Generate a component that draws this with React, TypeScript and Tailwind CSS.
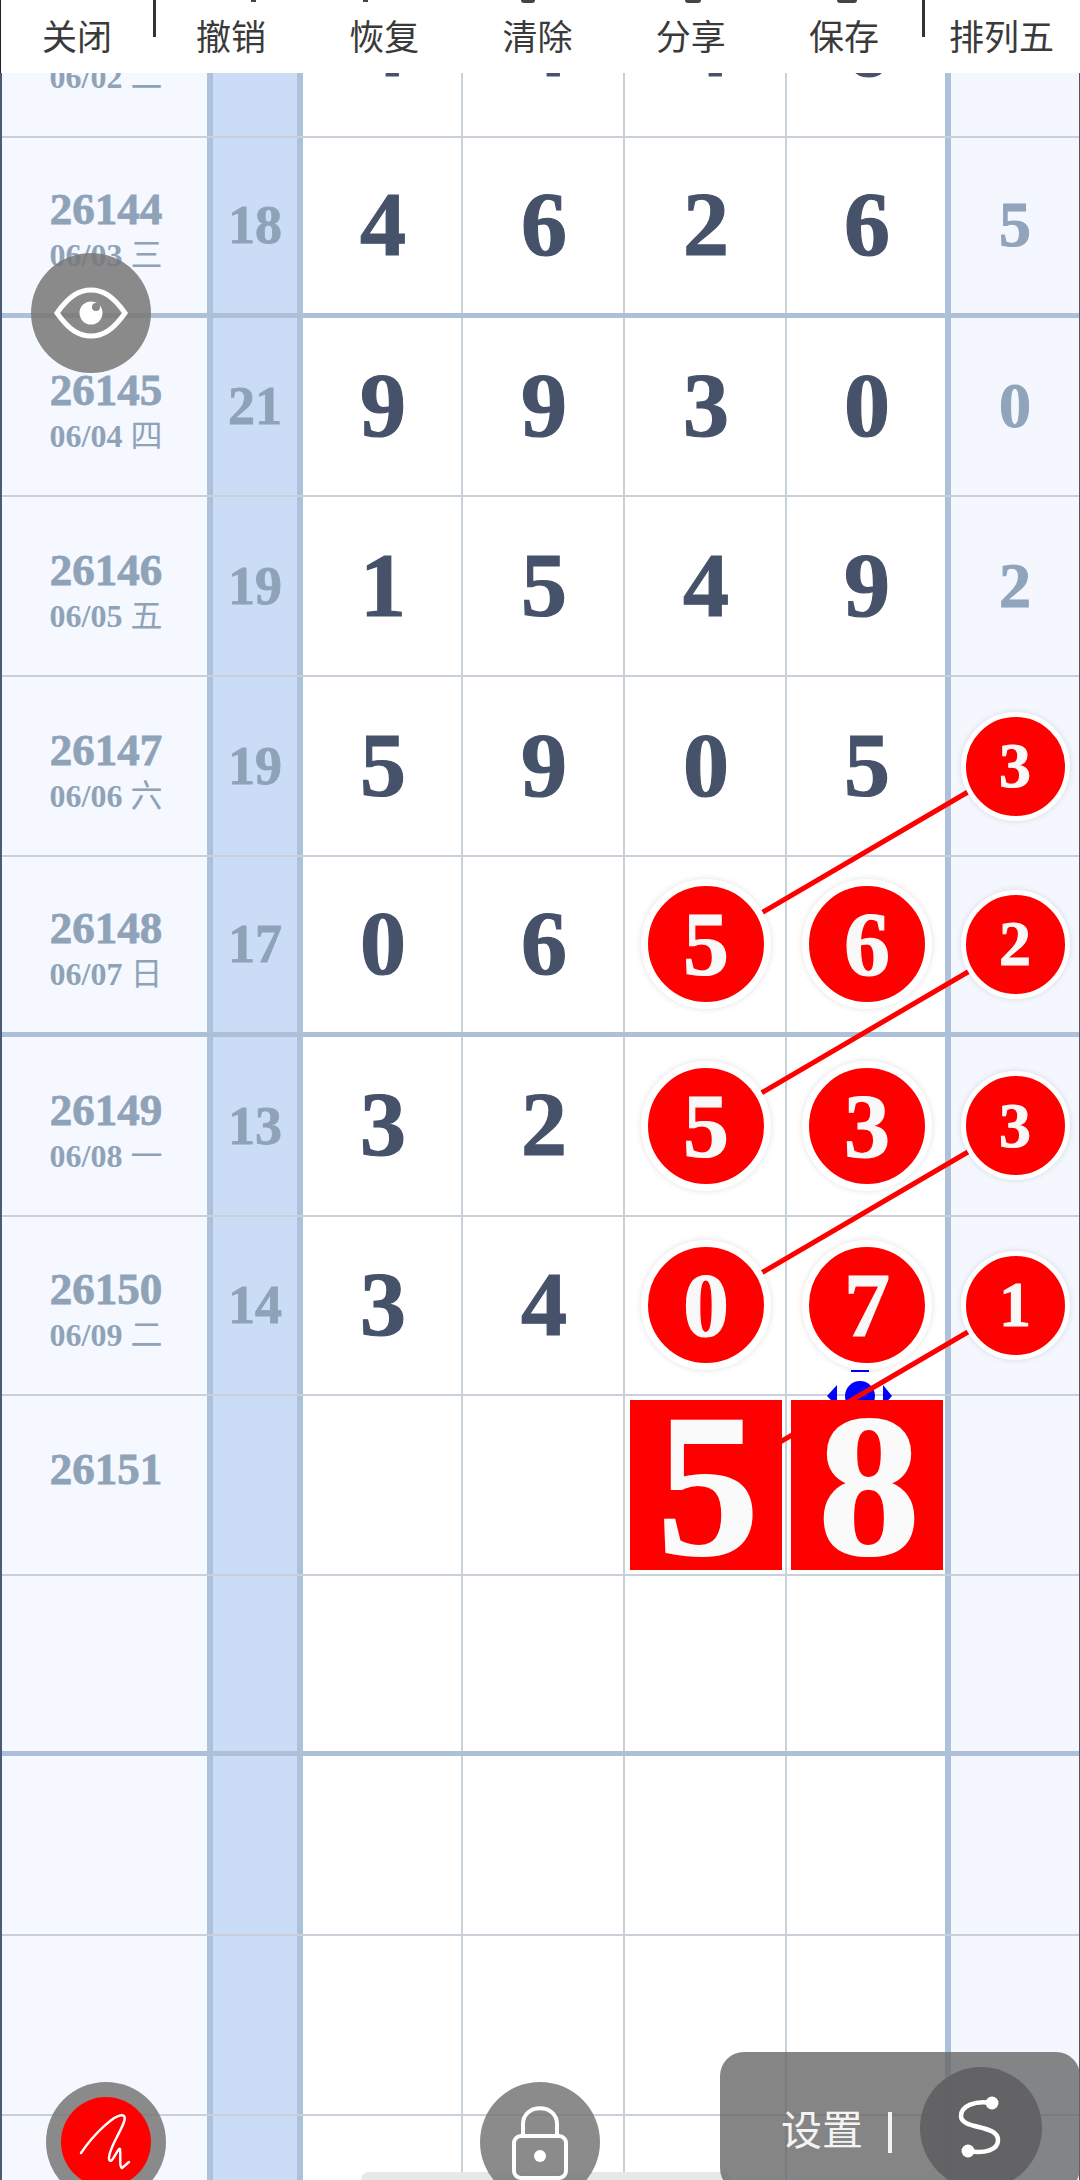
import React from 'react';

type Cell = { v: string; hit?: boolean; box?: boolean };

interface RowData {
  issue: string;
  date: string;
  week: string;
  sum: string;
  nums: Cell[];
  last?: Cell;
}

const n = (v: string): Cell => ({ v });
const hit = (v: string): Cell => ({ v, hit: true });
const box = (v: string): Cell => ({ v, box: true });
const blank = n('');

const rows: RowData[] = [
  { issue: '26143', date: '06/02', week: '二', sum: '', nums: [n('4'), n('4'), n('4'), n('6')] },
  { issue: '26144', date: '06/03', week: '三', sum: '18', nums: [n('4'), n('6'), n('2'), n('6')], last: n('5') },
  { issue: '26145', date: '06/04', week: '四', sum: '21', nums: [n('9'), n('9'), n('3'), n('0')], last: n('0') },
  { issue: '26146', date: '06/05', week: '五', sum: '19', nums: [n('1'), n('5'), n('4'), n('9')], last: n('2') },
  { issue: '26147', date: '06/06', week: '六', sum: '19', nums: [n('5'), n('9'), n('0'), n('5')], last: hit('3') },
  { issue: '26148', date: '06/07', week: '日', sum: '17', nums: [n('0'), n('6'), hit('5'), hit('6')], last: hit('2') },
  { issue: '26149', date: '06/08', week: '一', sum: '13', nums: [n('3'), n('2'), hit('5'), hit('3')], last: hit('3') },
  { issue: '26150', date: '06/09', week: '二', sum: '14', nums: [n('3'), n('4'), hit('0'), hit('7')], last: hit('1') },
  { issue: '26151', date: '\u00a0', week: '', sum: '', nums: [blank, blank, box('5'), box('8')] },
  { issue: '', date: '', week: '', sum: '', nums: [blank, blank, blank, blank] },
  { issue: '', date: '', week: '', sum: '', nums: [blank, blank, blank, blank] },
  { issue: '', date: '', week: '', sum: '', nums: [blank, blank, blank, blank] },
  { issue: '', date: '', week: '', sum: '', nums: [blank, blank, blank, blank] },
];

const menu = ['撤销', '恢复', '清除', '分享', '保存'];

function NumCell({ cell }: { cell: Cell }) {
  if (cell.box) {
    return (
      <div className="relative z-20 flex h-[170px] w-[152px] items-center justify-center bg-[#ff0000] pl-[4px] text-[204px] leading-none font-bold text-[#fafafa] [-webkit-text-stroke:2px_#fafafa]">
        {cell.v}
      </div>
    );
  }
  if (cell.hit) {
    return (
      <div className="relative z-20 flex h-[130px] w-[130px] items-center justify-center rounded-full border-[7px] border-white bg-[#ff0000] text-[92px] leading-none font-bold text-[#f8f8f8] shadow-[0_0_6px_rgba(0,0,0,0.12)] [-webkit-text-stroke:1.2px_#f8f8f8]">
        {cell.v}
      </div>
    );
  }
  return (
    <span className="pb-[3px] text-[92px] leading-none font-bold text-[#46526a] [-webkit-text-stroke:1.2px_#46526a]">
      {cell.v}
    </span>
  );
}

function LastCell({ cell }: { cell?: Cell }) {
  if (!cell) return null;
  if (cell.hit) {
    return (
      <div className="relative z-20 flex h-[109px] w-[109px] items-center justify-center rounded-full border-[5px] border-white bg-[#ff0000] text-[64px] leading-none font-bold text-[#f8f8f8] shadow-[0_0_6px_rgba(0,0,0,0.12)] [-webkit-text-stroke:1px_#f8f8f8]">
        {cell.v}
      </div>
    );
  }
  return (
    <span className="text-[64px] leading-none font-bold text-[#90a5bb] [-webkit-text-stroke:1px_#90a5bb]">
      {cell.v}
    </span>
  );
}

function Row({ row, thick }: { row: RowData; thick: boolean }) {
  const line = thick
    ? 'h-[179.8px] border-b-[5px] border-b-[#aec0d8]'
    : 'h-[179.8px] border-b-2 border-b-[#c9d0da]';
  return (
    <div className={`grid grid-cols-[211px_90px_160px_162px_162px_164px_1fr] ${line}`}>
      <div className="flex flex-col items-center justify-center border-r-[6px] border-r-[#aec1da] bg-[#f5f8ff] pt-[8px] pl-[3px] text-[#8fa3b8]">
        <span className="text-[45px] leading-none font-bold [-webkit-text-stroke:0.8px_#8fa3b8]">{row.issue}</span>
        <span className="mt-[7px] text-[32px] leading-none">
          <span className="font-bold">{row.date}</span>
          {row.week && <span className="ml-[8px] font-normal">{row.week}</span>}
        </span>
      </div>
      <div className="flex items-center justify-center border-r-[6px] border-r-[#aec1da] bg-[#cadcf6] text-[54px] leading-none font-bold text-[#8fa3b8] [-webkit-text-stroke:0.8px_#8fa3b8]">
        {row.sum}
      </div>
      {row.nums.map((cell, i) => (
        <div
          key={i}
          className={
            i === 3
              ? 'flex items-center justify-center border-r-[6px] border-r-[#aec1da] bg-white pl-[2px]'
              : 'flex items-center justify-center border-r-2 border-r-[#c8d0d8] bg-white pl-[2px]'
          }
        >
          <NumCell cell={cell} />
        </div>
      ))}
      <div className="flex items-center justify-center bg-[#f4f7fe]">
        <LastCell cell={row.last} />
      </div>
    </div>
  );
}

function Header() {
  return (
    <div className="relative z-30 flex h-[73px] items-start border-l border-l-[#222] bg-white text-[35px] leading-none text-[#3a3a3a]">
      <div className="flex h-[73px] w-[152px] items-center justify-center pb-[5px]">关闭</div>
      <div className="h-[37px] w-[3px] bg-[#333]" />
      {menu.map((label) => (
        <div key={label} className="flex h-[73px] flex-1 items-center justify-center pr-[3px] pb-[5px]">
          {label}
        </div>
      ))}
      <div className="h-[37px] w-[3px] bg-[#333]" />
      <div className="flex h-[73px] w-[155px] items-center justify-center pr-[2px] pb-[5px]">排列五</div>
      {/* bottoms of the toolbar icons, cut off by the top of the page */}
      <span className="absolute top-0 left-[250px] h-[2px] w-[5px] bg-[#444]" />
      <span className="absolute top-0 left-[362px] h-[2px] w-[5px] bg-[#444]" />
      <span className="absolute top-0 left-[520px] h-[3px] w-[14px] rounded-b-full bg-[#444]" />
      <span className="absolute top-0 left-[684px] h-[3px] w-[16px] rounded-b-full bg-[#444]" />
      <span className="absolute top-0 left-[836px] h-[3px] w-[20px] rounded-b-full bg-[#444]" />
    </div>
  );
}

function Lines() {
  return (
    <svg className="absolute top-0 left-0 z-10" width="1080" height="2180" viewBox="0 0 1080 2180">
      <rect x="851" y="1370" width="18" height="2" fill="#0000ff" />
      <circle cx="860" cy="1396" r="15" fill="#0000ff" />
      <path d="M837 1385 L827 1396 L837 1406 Z M883 1385 L892 1396 L883 1406 Z" fill="#0000ff" />
      <g stroke="#ff0000" strokeWidth="5" fill="none">
        <line x1="1014" y1="765" x2="705" y2="946" />
        <line x1="1014" y1="945" x2="705" y2="1126" />
        <line x1="1014" y1="1125" x2="705" y2="1306" />
        <line x1="1014" y1="1305" x2="705" y2="1486" />
      </g>
    </svg>
  );
}

function FloatingButtons() {
  return (
    <>
      {/* eye */}
      <div className="absolute top-[253px] left-[31px] z-40 flex h-[120px] w-[120px] items-center justify-center rounded-full bg-[#777]/85">
        <svg width="74" height="52" viewBox="0 0 74 52">
          <path
            d="M3 26 C15 9 25 3 37 3 C49 3 59 9 71 26 C59 43 49 49 37 49 C25 49 15 43 3 26 Z"
            fill="none"
            stroke="#fff"
            strokeWidth="5"
          />
          <circle cx="37" cy="26" r="11.5" fill="#fff" />
          <circle cx="42" cy="20" r="4" fill="#8a888a" />
        </svg>
      </div>

      {/* pen */}
      <div className="absolute top-[2082px] left-[46px] z-40 flex h-[120px] w-[120px] items-center justify-center rounded-full bg-[#777]/85">
        <svg width="90" height="90" viewBox="0 0 90 90">
          <circle cx="45" cy="45" r="45" fill="#ff0000" />
          <path
            d="M20 56 C32 38 56 14 63 19 C68 24 47 50 48 62 C50 70 57 50 59 52 C60 60 58 70 61 71 L68 65"
            fill="none"
            stroke="#fff"
            strokeWidth="2.4"
            strokeLinecap="round"
            strokeLinejoin="round"
          />
        </svg>
      </div>

      {/* lock */}
      <div className="absolute top-[2082px] left-[480px] z-40 flex h-[120px] w-[120px] justify-center rounded-full bg-[#777]/85 pt-[22px]">
        <svg width="60" height="78" viewBox="0 0 60 78">
          <path d="M13 32 V20 C13 -1 47 -1 47 20 V32" fill="none" stroke="#fff" strokeWidth="4" />
          <rect x="4" y="32" width="52" height="42" rx="7" fill="none" stroke="#fff" strokeWidth="4" />
          <circle cx="30" cy="52" r="6" fill="#fff" />
        </svg>
      </div>

      {/* scrollbar */}
      <div className="absolute top-[2172px] left-[361px] z-30 h-[8px] w-[370px] rounded-t-full bg-[#e8e8e8]" />

      {/* settings */}
      <div className="absolute top-[2052px] left-[720px] z-40 flex h-[140px] w-[360px] items-start rounded-[24px] bg-[#666]/80 pt-[15px] pl-[61px]">
        <span className="mt-[40px] text-[41px] leading-none text-[#f4f4f4]">设置</span>
        <div className="mt-[45px] ml-[25px] h-[41px] w-[4px] bg-[#f4f4f4]" />
        <div className="ml-[28px] flex h-[122px] w-[122px] items-center justify-center rounded-full bg-[#616163]/95">
          <svg width="60" height="80" viewBox="0 0 60 80">
            <path
              d="M41 15 C24 12 10 18 10 28 C10 42 47 36 47 52 C47 62 34 66 17 63"
              fill="none"
              stroke="#fff"
              strokeWidth="4.5"
              strokeLinecap="round"
            />
            <circle cx="41" cy="15" r="6.5" fill="#fff" />
            <circle cx="17" cy="63" r="6.5" fill="#fff" />
          </svg>
        </div>
      </div>
    </>
  );
}

export default function App() {
  return (
    <div className="relative h-[2180px] w-[1080px] overflow-hidden bg-white font-['Noto_Sans_CJK_SC',sans-serif]">
      <Header />
      <div className="-mt-[115px] border-r border-r-[#555] border-l-2 border-l-[#4b5b74] font-['Liberation_Serif','Noto_Sans_CJK_SC',serif]">
        {rows.map((row, i) => (
          <Row key={i} row={row} thick={i % 4 === 1} />
        ))}
      </div>
      <Lines />
      <FloatingButtons />
    </div>
  );
}
